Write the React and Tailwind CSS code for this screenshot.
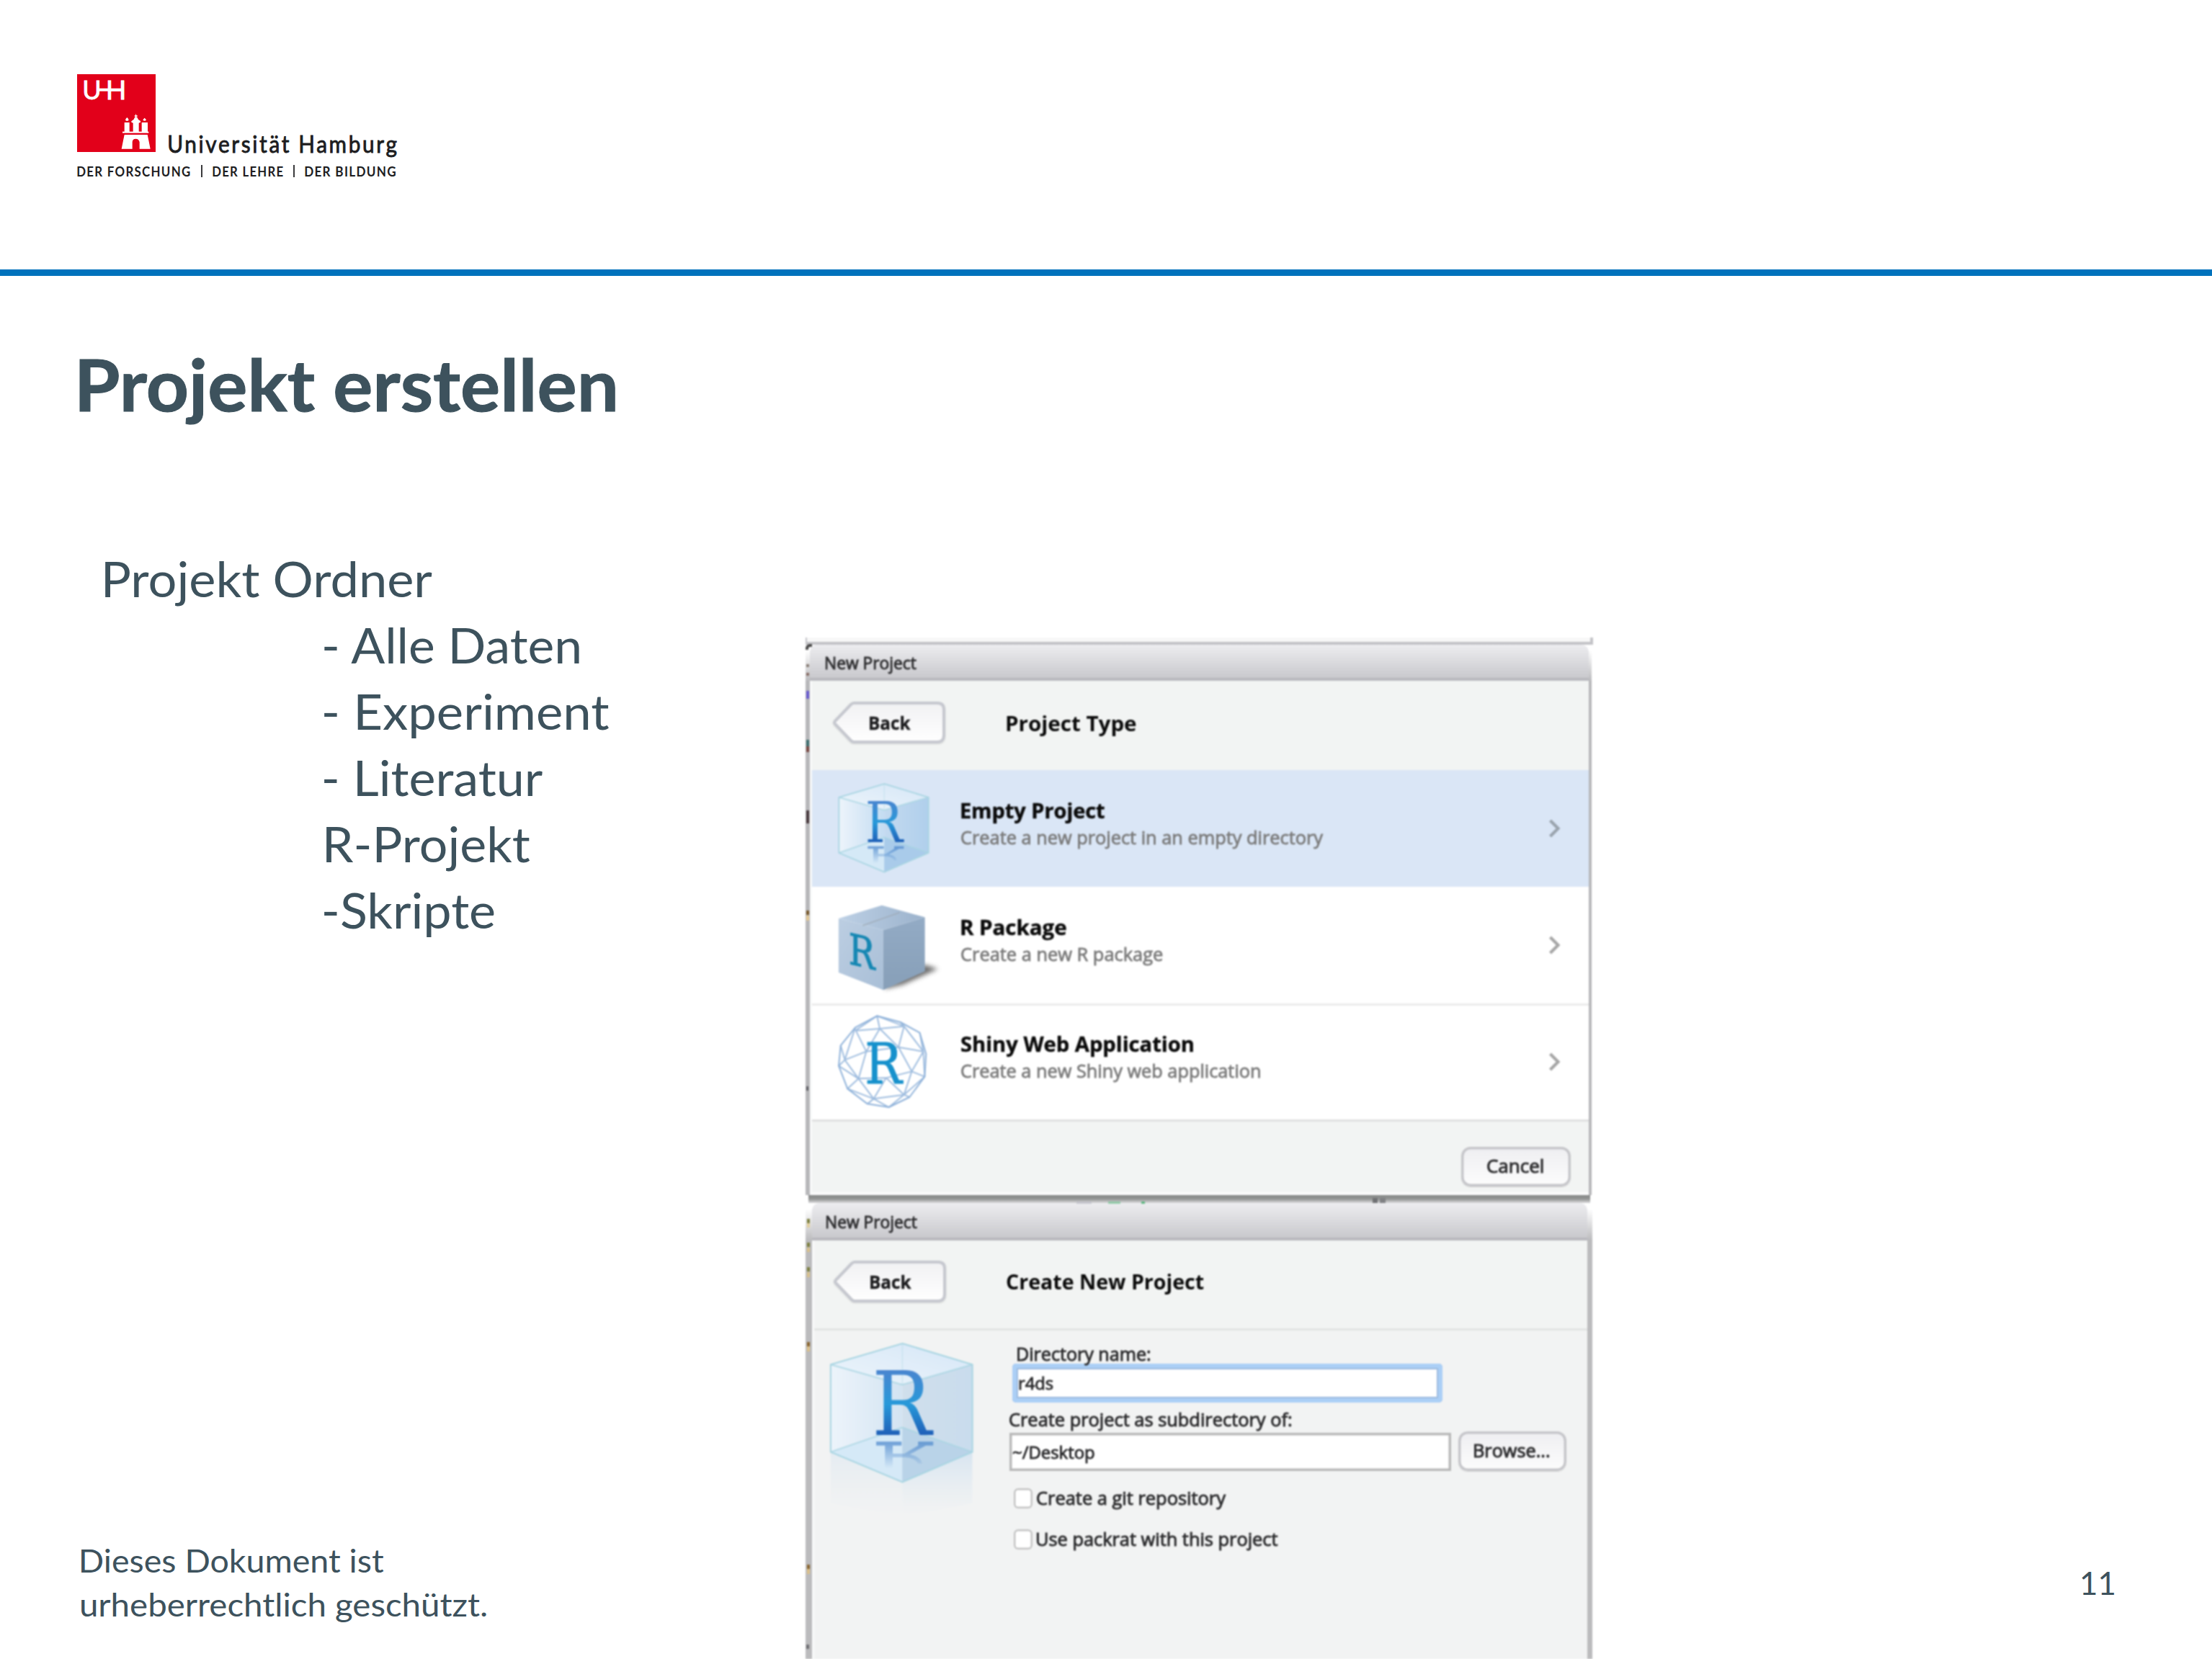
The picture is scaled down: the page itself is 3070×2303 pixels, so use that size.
import { useLayoutEffect, useRef, useState } from "react";

/* A single line of text whose inked width is fitted to `w` pixels. */
function Line({ w, className = "", children }) {
  const ref = useRef(null);
  const [fit, setFit] = useState({ scale: 1, shift: 0 });
  useLayoutEffect(() => {
    const cs = getComputedStyle(ref.current);
    const ctx = document.createElement("canvas").getContext("2d");
    ctx.font = `${cs.fontWeight} ${cs.fontSize} ${cs.fontFamily}`;
    if (cs.letterSpacing !== "normal") ctx.letterSpacing = cs.letterSpacing;
    const m = ctx.measureText(children);
    const track = cs.letterSpacing === "normal" ? 0 : parseFloat(cs.letterSpacing);
    const left = m.actualBoundingBoxLeft;
    const ink = left + Math.min(m.actualBoundingBoxRight, m.width - track);
    const scale = w / ink;
    setFit({ scale, shift: left * scale });
  }, [w, children]);
  return (
    <div style={{ width: w }}>
      <span
        ref={ref}
        className={`block w-max origin-left whitespace-pre ${className}`}
        style={{ transform: `translateX(${fit.shift}px) scaleX(${fit.scale})` }}
      >
        {children}
      </span>
    </div>
  );
}

function Logo() {
  return (
    <div className="pl-[107px] pt-[103px] font-['Lato',sans-serif] text-[#1d1d1f]">
      <div className="flex h-[108px]">
        <svg viewBox="82 69 327 324" className="h-[108px] w-[109px]" fill="#fff">
          <rect x="82" y="69" width="327" height="324" fill="#e2001a" />
          <g fontFamily="Lato, sans-serif" fontSize="110" stroke="#fff" strokeWidth="2.5">
            <text x="104" y="175" textLength="79" lengthAdjust="spacingAndGlyphs">U</text>
            <text x="201" y="174" textLength="86" lengthAdjust="spacingAndGlyphs">H</text>
          </g>
          <rect x="168" y="128" width="100" height="12" />
          <path d="M267 380L274 345L279 321H375L380 345L387 380H342V352Q340 338 326 338Q312 338 312 352V380Z" />
          <rect x="271" y="308" width="109" height="6" />
          <rect x="279" y="270" width="21" height="40" />
          <rect x="351" y="270" width="25" height="40" />
          <path d="M283 260Q284 254 290 249Q296 254 297 260Q290 267 283 260ZM356 260Q358 255 363 251Q368 255 370 260Q363 266 356 260Z" />
          <path d="M315 310V272L308 269V265L318 257L322 248H325V245H321V241H325L327 233L329 241H333V245H329V248H332L337 258L346 264V269L339 272V310Z" />
        </svg>
        <div className="pl-[17.5px] pt-[80px]">
          <Line w={316.5} className="text-[33.5px] leading-none tracking-[3px] [-webkit-text-stroke:0.9px_#1d1d1f]">
            Universität Hamburg
          </Line>
        </div>
      </div>
      <div className="flex items-center pt-[16.5px] text-[19.6px] leading-none font-bold">
        <Line w={157} className="tracking-[1.5px]">DER FORSCHUNG</Line>
        <div className="mx-[14.5px] h-[17px] w-[2px] bg-[#3a3a3c]" />
        <Line w={98} className="tracking-[1.5px]">DER LEHRE</Line>
        <div className="mx-[14px] h-[17px] w-[2px] bg-[#3a3a3c]" />
        <Line w={126.5} className="tracking-[1.5px]">DER BILDUNG</Line>
      </div>
    </div>
  );
}

function Cube({ id, floor, height, className, strong }) {
  return (
    <svg viewBox={`120 60 560 ${height}`} preserveAspectRatio="none" className={className}>
      <defs>
        <linearGradient id={`${id}l`} x1="0" x2="1">
          <stop offset="0" stopColor="#edf4fb" />
          <stop offset="1" stopColor={strong ? "#c3dcf2" : "#d3e4f2"} />
        </linearGradient>
        <linearGradient id={`${id}r`} x1="0" x2="1">
          <stop offset="0" stopColor={strong ? "#c3daf0" : "#d0dfec"} />
          <stop offset="1" stopColor={strong ? "#b0cfec" : "#c9dced"} />
        </linearGradient>
        <linearGradient id={`${id}t`} x1="0" x2="1" y1="1" y2="0">
          <stop offset="0" stopColor="#edf5fb" />
          <stop offset="1" stopColor="#d5e6f7" />
        </linearGradient>
        <linearGradient id={`${id}R`} x1="0" x2="0" y1="0" y2="1">
          <stop offset="0.15" stopColor="#4c84cf" />
          <stop offset="0.5" stopColor="#2799d9" />
          <stop offset="0.8" stopColor="#1f5fb8" />
        </linearGradient>
        <linearGradient id={`${id}m`} gradientUnits="userSpaceOnUse" x1="0" x2="0" y1="484" y2="595">
          <stop offset="0" stopColor="#4a86cc" stopOpacity="0.75" />
          <stop offset="1" stopColor="#4a86cc" stopOpacity="0" />
        </linearGradient>
        <linearGradient id={`${id}f`} gradientUnits="userSpaceOnUse" x1="0" x2="0" y1="527" y2="790">
          <stop offset="0" stopColor="#cfe0f0" stopOpacity="0.75" />
          <stop offset="1" stopColor="#dde8f2" stopOpacity="0" />
        </linearGradient>
      </defs>
      {floor && (
        <>
          <path d="M138 527L398 652V800L138 740Z" fill={`url(#${id}f)`} opacity="0.5" />
          <path d="M652 527L398 652V800L652 740Z" fill={`url(#${id}f)`} />
        </>
      )}
      <path d="M138 163L398 247V652L138 527Z" fill={`url(#${id}l)`} />
      <path d="M652 163L398 247V652L652 527Z" fill={`url(#${id}r)`} />
      <path d="M398 75L652 163L398 247L138 163Z" fill={`url(#${id}t)`} />
      <path d="M398 425L138 527L398 652Z" fill="#d5e9f7" />
      <path d="M398 425L652 527L398 652Z" fill={strong ? "#a9cbea" : "#b9d3e8"} />
      <g fill="none" stroke="#a8d5e2" strokeWidth={strong ? 1.8 : 2}>
        <path vectorEffect="non-scaling-stroke" d="M398 75L652 163V527L398 652L138 527V163Z" />
        <path vectorEffect="non-scaling-stroke" d="M138 163L398 247L652 163M138 527L398 425L652 527" opacity="0.8" />
        <path vectorEffect="non-scaling-stroke" d="M398 75V247" opacity="0.3" />
      </g>
      <path
        d="M303 484H395V500H363V534H405L455 500V484H510V500H483L425 537Q462 545 470 575H455Q445 552 410 549H363V595H335V500H303Z"
        fill={`url(#${id}m)`}
      />
      <text x="288" y="456" textLength="216" lengthAdjust="spacingAndGlyphs" fontFamily="DejaVu Serif, serif" fontSize="369" fill={`url(#${id}R)`}>R</text>
    </svg>
  );
}

function PackageBox() {
  return (
    <svg viewBox="150 60 420 400" preserveAspectRatio="none" className="ml-[30.4px] mt-[19px] h-[133.3px] w-[160.7px]">
      <defs>
        <linearGradient id="pkl" x1="0" x2="1" y1="0" y2="1">
          <stop offset="0" stopColor="#bccee2" />
          <stop offset="1" stopColor="#a9bfd7" />
        </linearGradient>
        <linearGradient id="pkr" x1="0" x2="0" y1="0" y2="1">
          <stop offset="0" stopColor="#93abc5" />
          <stop offset="1" stopColor="#879fb8" />
        </linearGradient>
        <linearGradient id="pkt" x1="0" x2="1">
          <stop offset="0" stopColor="#bdd0e5" />
          <stop offset="1" stopColor="#9bb2cc" />
        </linearGradient>
        <filter id="soft" x="-20%" y="-20%" width="140%" height="140%">
          <feGaussianBlur stdDeviation="9" />
        </filter>
      </defs>
      <path d="M335 428L400 411L528 345L481 328L340 400Z" fill="#4a4a4a" opacity="0.8" filter="url(#soft)" />
      <path d="M168 135L330 183V433L168 360Z" fill="url(#pkl)" />
      <path d="M481 130L330 183V433L481 355Z" fill="url(#pkr)" />
      <path d="M325 80L481 130L330 183L168 135Z" fill="url(#pkt)" />
      <path d="M255 165L390 110" stroke="#9fabb8" strokeWidth="4" />
      <g transform="matrix(1 0.27 0 1 210 315)">
        <text x="-6" y="10" textLength="96" lengthAdjust="spacingAndGlyphs" fontFamily="DejaVu Serif, serif" fontSize="178" fill="#1587b3" stroke="#1587b3" strokeWidth="3">R</text>
      </g>
    </svg>
  );
}

function ShinyBall() {
  return (
    <svg viewBox="160 535 340 395" preserveAspectRatio="none" className="ml-[34px] mt-[15.3px] h-[131.7px] w-[130px]">
      <g fill="none" stroke="#8fb2da" strokeWidth="2" strokeLinejoin="round">
        <path vectorEffect="non-scaling-stroke" d="M307 542L392 568L462 612L485 700L480 795L425 880L350 922L272 908L200 845L168 750L175 665L228 590Z" />
        <path vectorEffect="non-scaling-stroke" opacity="0.85" d="M307 542L317 595M230 603L317 595L405 585L307 542L228 603M317 595L385 672M317 595L268 690M230 603L268 690L385 672L475 690M405 585L385 672M405 585L475 690M405 585L392 568M268 690L190 725L228 590M190 725L240 803M268 690L240 803M385 672L433 773L475 690M433 773L480 795M433 773L340 800L240 803M433 773L405 870M340 800L295 887M340 800L405 870M240 803L295 887L405 870L350 922L295 887L272 908M405 870L480 795M240 803L200 845L295 887M240 803L168 750L190 725L175 665M475 690L462 612M475 690L480 795M405 870L425 880" />
      </g>
      <text x="263" y="822" textLength="135" lengthAdjust="spacingAndGlyphs" fontFamily="DejaVu Serif, serif" fontSize="233" fill="#1691cc" stroke="#1691cc" strokeWidth="3">R</text>
    </svg>
  );
}

function Chevron({ color }) {
  return (
    <svg viewBox="0 0 21 30" className="mr-[37px] mt-[66px] ml-auto h-[30px] w-[21px]" fill="none" stroke={color} strokeWidth="4.2">
      <path d="M4.5 4L15.5 15L4.5 26" />
    </svg>
  );
}

function ProjectRow({ icon, title, titleW, sub, subW, color, className, shift = "" }) {
  return (
    <div className={className}>
      <div className={`flex items-start ${shift}`}>
        <div className="w-[206.5px] shrink-0">{icon}</div>
        <div className="flex flex-col gap-[11.5px] pt-[41.5px]">
          <Line w={titleW} className="text-[28px] leading-none font-bold text-[#0a0a0a] [-webkit-text-stroke:0.4px_#0a0a0a]">{title}</Line>
          <Line w={subW} className="text-[25.3px] leading-none text-[#7b7b7b] [-webkit-text-stroke:0.8px_#7b7b7b]">{sub}</Line>
        </div>
        <Chevron color={color} />
      </div>
    </div>
  );
}

function TitleBar({ className }) {
  return (
    <div className={`rounded-t-[10px] border-b-4 border-[#b9b9be] bg-linear-to-b from-[#ededf0] to-[#c9c9cd] ${className}`}>
      <Line w={125.6} className="text-[23px] leading-none text-[#2e2e30] [-webkit-text-stroke:0.9px_#2e2e30]">New Project</Line>
    </div>
  );
}

function BackButton({ id }) {
  return (
    <div className="relative h-[58px] w-[156px]">
      <svg viewBox="0 0 156 58" className="absolute inset-0 h-[58px] w-[156px] drop-shadow-[0_1px_1px_rgba(0,0,0,0.12)]">
        <defs>
          <linearGradient id={id} x1="0" x2="0" y1="0" y2="1">
            <stop offset="0" stopColor="#f1f1f3" />
            <stop offset="1" stopColor="#ffffff" />
          </linearGradient>
        </defs>
        <path d="M29 2H145Q154 2 154 11V46Q154 56 145 56H29Q27 56 25 54L3 31Q1 29 3 27L25 4Q27 2 29 2Z" fill={`url(#${id})`} stroke="#c6c8cf" strokeWidth="4" />
      </svg>
      <div className="relative pl-[51px] pt-[16.5px]">
        <Line w={56.5} className="text-[25px] leading-none font-bold text-[#1c1c1e] [-webkit-text-stroke:0.4px_#1c1c1e]">Back</Line>
      </div>
    </div>
  );
}

function PushButton({ children, w, className }) {
  return (
    <div className={`rounded-[13px] bg-linear-to-b from-[#eeeef1] to-[#fdfdfd] shadow-[inset_0_0_0_3.5px_#c6c6ca,0_1px_1px_#d0d0d0] ${className}`}>
      <Line w={w} className="text-[25px] leading-none text-[#2f2f31] [-webkit-text-stroke:1px_#2f2f31]">{children}</Line>
    </div>
  );
}

function CheckRow({ w, children }) {
  return (
    <div className="flex h-[28.3px] items-start gap-[6.2px] pl-[6px]">
      <div className="h-[28.3px] w-[26.5px] rounded-[6px] bg-white shadow-[inset_0_0_0_2.5px_#c4c4c4]" />
      <Line w={w} className="mt-[1.2px] text-[25.3px] leading-none">{children}</Line>
    </div>
  );
}

function FirstDialog() {
  return (
    <div className="mr-[2px] bg-[linear-gradient(to_bottom,#ffffff_8px,#b7b7ba_52px)] pl-[6px] pr-[4px]">
      <TitleBar className="h-[50px] pl-[21.8px] pt-[14.3px]" />
      <div className="border-l-[3px] border-[#f9fafa] bg-[#f2f4f3]">
        <div className="flex h-[124px] items-start bg-[#f2f4f3] pl-[28.5px] pt-[29px]">
          <BackButton id="bk1" />
          <div className="pl-[85px] pt-[15.5px]">
            <Line w={180} className="text-[28px] leading-none font-bold text-[#0a0a0a]">Project Type</Line>
          </div>
        </div>
        <ProjectRow
          className="h-[162px] bg-[#dae6f6]"
          icon={<Cube id="cs" strong height={620} className="ml-[33px] mt-[15.5px] h-[131.4px] w-[135.5px]" />}
          title="Empty Project"
          titleW={199.5}
          sub="Create a new project in an empty directory"
          subW={502}
          color="#99a3ad"
        />
        <ProjectRow
          className="h-[162px] bg-white"
          icon={<PackageBox />}
          title="R Package"
          titleW={146}
          sub="Create a new R package"
          subW={279}
          color="#a6a6a6"
        />
        <ProjectRow
          className="h-[164px] border-y-[3px] border-t-[#ebebeb] border-b-[#e0e1e1] bg-white"
          shift="-mt-[3px]"
          icon={<ShinyBall />}
          title="Shiny Web Application"
          titleW={322.5}
          sub="Create a new Shiny web application"
          subW={415}
          color="#a6a6a6"
        />
        <div className="flex h-[102px] items-start justify-end border-b-4 border-[#fbfbfb] pr-[25.5px] pt-[35px]">
          <PushButton w={78} className="h-[55px] w-[151.5px] pl-[36.3px] pt-[14px]">Cancel</PushButton>
        </div>
      </div>
    </div>
  );
}

function SecondDialog() {
  return (
    <div className="mr-[1px] flex grow flex-col bg-[linear-gradient(to_bottom,#ffffff_8px,#bbbbbd_52px)] pl-[9px] pr-[7px]">
      <TitleBar className="h-[52px] pl-[20.2px] pt-[14.6px]" />
      <div className="grow border-l-[3px] border-[#f9fafa] bg-[#f2f3f3] text-[#2b2b2d]">
        <div className="flex h-[125px] items-start border-b-[3px] border-[#e3e5e4] bg-[#f2f4f3] pl-[27.4px] pt-[28.3px]">
          <BackButton id="bk2" />
          <div className="pl-[84px] pt-[14.7px]">
            <Line w={274} className="text-[28px] leading-none font-bold text-[#0a0a0a]">Create New Project</Line>
          </div>
        </div>
        <div className="flex items-start pl-[16px] [-webkit-text-stroke:0.9px_#2b2b2d]">
          <Cube id="cb" floor height={760} className="mt-[13px] h-[253.3px] w-[214.3px] [-webkit-text-stroke:0]" />
          <div className="pl-[40.5px] pt-[20px]">
            <div className="pl-[11.2px]">
              <Line w={184} className="text-[25.3px] leading-none">Directory name:</Line>
            </div>
            <div className="ml-[4.2px] mt-[1px] h-[53.4px] w-[597.2px] rounded-[5px] bg-white pl-[10px] pt-[14.8px] shadow-[inset_0_0_0_6px_#abcff6,inset_0_0_0_8px_#9dbbdf]">
              <Line w={46.7} className="text-[24px] leading-none">r4ds</Line>
            </div>
            <div className="pt-[11.6px]">
              <Line w={391} className="text-[25.3px] leading-none">Create project as subdirectory of:</Line>
            </div>
            <div className="mt-[3.3px] flex h-[55.3px] items-start gap-[9.3px]">
              <div className="mt-[2px] h-[53px] w-[613.5px] bg-white pl-[5.2px] pt-[14.7px] shadow-[inset_0_0_0_3.5px_#b9b9b9]">
                <Line w={113} className="text-[24px] leading-none">~/Desktop</Line>
              </div>
              <PushButton w={104} className="h-[55.3px] w-[150px] pl-[22.3px] pt-[13.8px]">Browse...</PushButton>
            </div>
            <div className="flex flex-col gap-[28.4px] pt-[24px]">
              <CheckRow w={262}>Create a git repository</CheckRow>
              <CheckRow w={334.5}>Use packrat with this project</CheckRow>
            </div>
          </div>
        </div>
      </div>
    </div>
  );
}

/* Fragments of the editor window that peek out behind the dialogs. */
function Specks() {
  return (
    <>
      <div className="absolute left-0 top-[9px] h-[8px] w-[9px] rounded-tl-[6px] border-l-4 border-t-4 border-[#4a4a4a]" />
      <div className="absolute left-[1px] top-[37px] h-[4px] w-[4px] bg-[#8a7f78]" />
      <div className="absolute left-[1px] top-[49px] h-[4px] w-[4px] bg-[#8a7068]" />
      <div className="absolute left-[1px] top-[74px] h-[11px] w-[4px] bg-[#6a5cd0]" />
      <div className="absolute left-[1px] top-[142px] h-[9px] w-[4px] bg-[#3f7070]" />
      <div className="absolute left-[1px] top-[151px] h-[8px] w-[4px] bg-[#7a4a44]" />
      <div className="absolute left-[1px] top-[240px] h-[18px] w-[4px] bg-[#4a3c40]" />
      <div className="absolute left-[1px] top-[379px] h-[6px] w-[4px] bg-[#7a5a2c]" />
      <div className="absolute left-[1px] top-[386px] h-[7px] w-[4px] bg-[#e5c894]" />
      <div className="absolute left-[1px] top-[623px] h-[6px] w-[3px] bg-[#606065]" />
      <div className="absolute left-[2px] top-[807px] h-[6px] w-[4px] bg-[#7d8040]" />
      <div className="absolute left-[2px] top-[813px] h-[6px] w-[4px] bg-[#e3cf9c]" />
      <div className="absolute left-[2px] top-[840px] h-[6px] w-[4px] bg-[#7d8040]" />
      <div className="absolute left-[2px] top-[847px] h-[6px] w-[4px] bg-[#d9c08a]" />
      <div className="absolute left-[2px] top-[874px] h-[6px] w-[4px] bg-[#7d8040]" />
      <div className="absolute left-[2px] top-[881px] h-[7px] w-[4px] bg-[#d9c08a]" />
      <div className="absolute left-[2px] top-[978px] h-[6px] w-[4px] bg-[#8a6630]" />
      <div className="absolute left-[2px] top-[984px] h-[7px] w-[4px] bg-[#dcc08a]" />
      <div className="absolute left-[2px] top-[1287px] h-[6px] w-[4px] bg-[#8a6630]" />
      <div className="absolute left-[2px] top-[1293px] h-[7px] w-[4px] bg-[#dcc08a]" />
      <div className="absolute left-[1px] top-[1398px] h-[6px] w-[4px] bg-[#707074]" />
      <div className="absolute left-[376px] top-[783px] h-[3px] w-[21px] bg-[#c4c4cc]" />
      <div className="absolute left-[420px] top-[783px] h-[3px] w-[17px] bg-[#8fc9a6]" />
      <div className="absolute left-[466px] top-[783px] h-[3px] w-[5px] bg-[#5ab67f]" />
      <div className="absolute left-[787px] top-[778px] h-[7px] w-[7px] bg-[#707174]" />
      <div className="absolute left-[797px] top-[778px] h-[7px] w-[8px] bg-[#808184]" />
    </>
  );
}

function Screenshot() {
  return (
    <div className="relative mt-[502px] flex w-[1093px] shrink-0 flex-col font-['Open_Sans',sans-serif] blur-[0.9px]">
      <div className="h-[10px] border-b-4 border-l-2 border-r-4 border-[#c3c3c7] bg-[#f8f8f8]" />
      <FirstDialog />
      <div className="mx-[4px] h-[11px] bg-linear-to-b from-[#858786] via-[#949695] to-[#dcdcde]" />
      <SecondDialog />
      <Specks />
    </div>
  );
}

export default function App() {
  return (
    <div className="flex h-[2303px] w-[3070px] flex-col overflow-hidden bg-white font-['Lato',sans-serif] text-[#3d525d]">
      <header className="h-[383px] shrink-0 border-b-[9px] border-[#0072bc]">
        <Logo />
      </header>
      <main className="flex min-h-0 grow">
        <section className="flex w-[1118px] shrink-0 flex-col pt-[100.5px]">
          <div className="pl-[110.3px]">
            <Line w={744} className="text-[98.7px] leading-none font-bold [-webkit-text-stroke:1px_#3d525d]">Projekt erstellen</Line>
          </div>
          <div className="pl-[146px] pt-[174.3px] text-[67.5px] leading-[92px]">
            <Line w={454}>Projekt Ordner</Line>
            <div className="pl-[304px]">
              <Line w={356.5}>- Alle Daten</Line>
              <Line w={395.4}>- Experiment</Line>
              <Line w={303.3}>- Literatur</Line>
              <div className="pl-[3px]">
                <Line w={282.5}>R-Projekt</Line>
              </div>
              <Line w={236.4}>-Skripte</Line>
            </div>
          </div>
          <div className="mt-auto pb-[45px] pl-[112px] text-[45px] leading-[61px]">
            <div className="pl-[1px]">
              <Line w={419.5}>Dieses Dokument ist</Line>
            </div>
            <Line w={563.5}>urheberrechtlich geschützt.</Line>
          </div>
        </section>
        <Screenshot />
        <aside className="flex grow items-end justify-end pb-[83.5px] pr-[136.3px] text-[45px] leading-none">
          <Line w={45}>11</Line>
        </aside>
      </main>
    </div>
  );
}
